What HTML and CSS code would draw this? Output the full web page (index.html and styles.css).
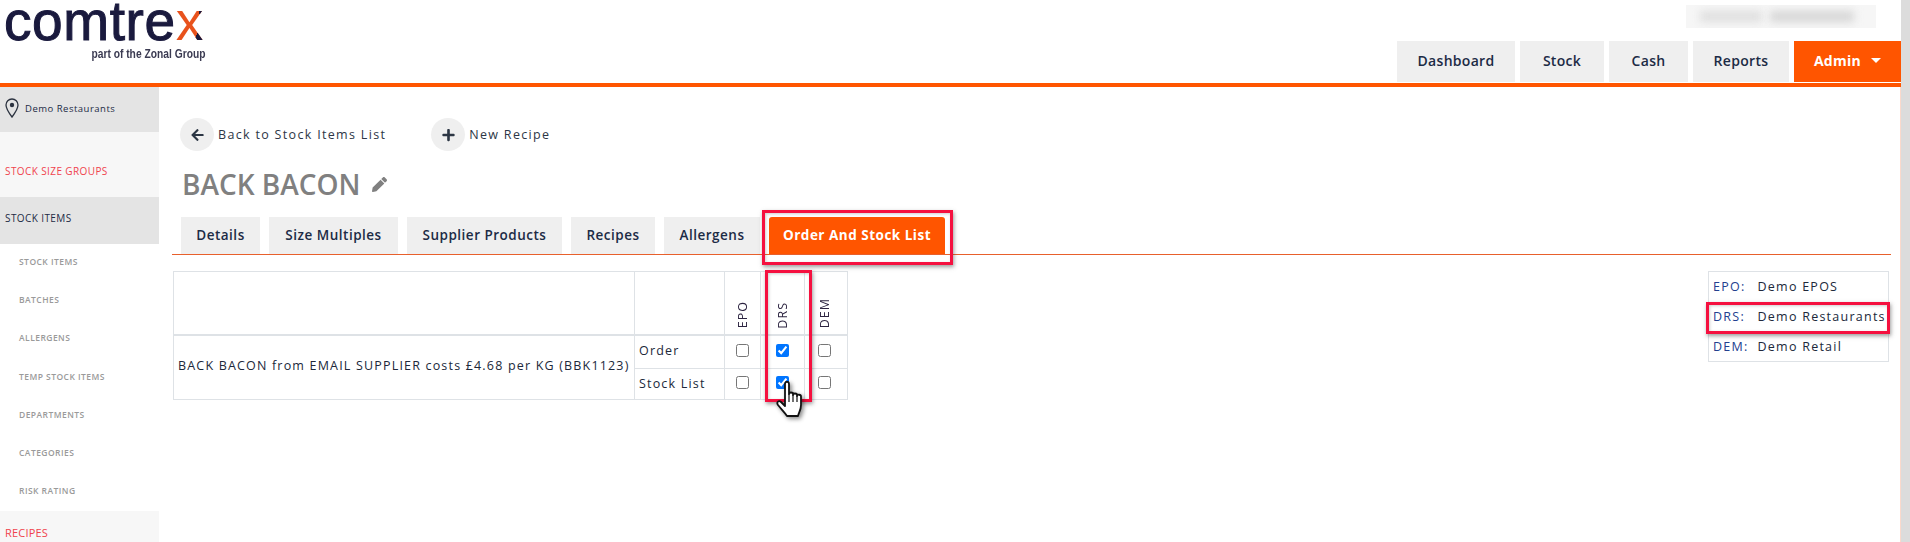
FILE: index.html
```html
<!DOCTYPE html>
<html lang="en">
<head>
<meta charset="utf-8">
<title>Back Bacon</title>
<link rel="stylesheet" href="styles.css">
</head>
<body>
<div class="page">
  <header class="header">
    <div class="logo">
      <div class="logo-word">comtre<span class="logo-x">x</span></div>
      <div class="logo-sub">part of the Zonal Group</div>
    </div>
    <div class="header-right">
      <div class="user-blur"><span class="blur-a"></span><span class="blur-b"></span></div>
      <nav class="topnav">
        <a class="topnav-item nav-dashboard">Dashboard</a>
        <a class="topnav-item nav-stock">Stock</a>
        <a class="topnav-item nav-cash">Cash</a>
        <a class="topnav-item nav-reports">Reports</a>
        <a class="topnav-item nav-admin">Admin<span class="caret"></span></a>
      </nav>
    </div>
  </header>
  <div class="body-row">
    <aside class="sidebar">
      <div class="site">
        <svg class="pin" viewBox="0 0 14 20"><path d="M7 1C3.600 1 1 3.600 1 7c0 4 6 12 6 12s6-8 6-12c0-3.400-2.600-6-6-6z" fill="none" stroke="#2c3340" stroke-width="1.300"/><circle cx="7" cy="7" r="2.200" fill="#2c3340"/></svg>
        <span>Demo Restaurants</span>
      </div>
      <div class="group group-first">STOCK SIZE GROUPS</div>
      <div class="group-open">STOCK ITEMS</div>
      <ul class="sublist">
        <li>STOCK ITEMS</li>
        <li>BATCHES</li>
        <li>ALLERGENS</li>
        <li>TEMP STOCK ITEMS</li>
        <li>DEPARTMENTS</li>
        <li>CATEGORIES</li>
        <li>RISK RATING</li>
      </ul>
      <div class="group group-last">RECIPES</div>
    </aside>
    <main class="main">
      <div class="actions">
        <a class="action action-back">
          <span class="action-icon"><svg class="icon-arrow" viewBox="0 0 448 512"><path d="M257.500 445.100l-22.200 22.200c-9.400 9.400-24.600 9.400-33.900 0L7 273c-9.400-9.400-9.400-24.600 0-33.900L201.400 44.700c9.400-9.400 24.600-9.400 33.900 0l22.200 22.200c9.500 9.500 9.300 25-.4 34.300L136.600 216H424c13.300 0 24 10.700 24 24v32c0 13.300-10.700 24-24 24H136.600l120.500 114.800c9.800 9.300 10 24.800.4 34.300z"/></svg></span>
          <span>Back to Stock Items List</span>
        </a>
        <a class="action">
          <span class="action-icon"><svg class="icon-plus" viewBox="0 0 448 512"><path d="M416 208H272V64c0-17.670-14.330-32-32-32h-32c-17.670 0-32 14.330-32 32v144H32c-17.670 0-32 14.330-32 32v32c0 17.670 14.330 32 32 32h144v144c0 17.670 14.330 32 32 32h32c17.670 0 32-14.330 32-32V304h144c17.670 0 32-14.330 32-32v-32c0-17.670-14.330-32-32-32z"/></svg></span>
          <span>New Recipe</span>
        </a>
      </div>
      <div class="title-row">
        <h1 class="title">BACK BACON</h1>
        <svg class="icon-pencil" viewBox="0 0 512 512"><path d="M497.900 142.100l-46.100 46.100c-4.700 4.700-12.300 4.700-17 0l-111-111c-4.700-4.700-4.700-12.300 0-17l46.100-46.100c18.700-18.700 49.100-18.700 67.900 0l60.100 60.100c18.800 18.700 18.800 49.100 0 67.900zM284.200 99.800L21.600 362.400.4 483.900c-2.900 16.400 11.400 30.600 27.800 27.800l121.500-21.300 262.600-262.600c4.700-4.700 4.700-12.300 0-17l-111-111c-4.800-4.700-12.400-4.700-17.100 0z"/></svg>
      </div>
      <div class="tabs">
        <a class="tab tab-details">Details</a>
        <a class="tab tab-size">Size Multiples</a>
        <a class="tab tab-supplier">Supplier Products</a>
        <a class="tab tab-recipes">Recipes</a>
        <a class="tab tab-allergens">Allergens</a>
        <a class="tab tab-active">Order And Stock List</a>
      </div>
      <div class="panels">
        <table class="grid">
          <colgroup>
            <col class="col-name"><col class="col-type"><col class="col-epo"><col class="col-drs"><col class="col-dem">
          </colgroup>
          <thead>
            <tr class="row-head">
              <th></th><th></th>
              <th><span class="vert">EPO</span></th>
              <th><span class="vert">DRS</span></th>
              <th class="cell-dem"><span class="vert">DEM</span></th>
            </tr>
          </thead>
          <tbody>
            <tr class="row-order">
              <td class="cell-name" rowspan="2">BACK BACON from EMAIL SUPPLIER costs £4.68 per KG (BBK1123)</td>
              <td class="cell-type">Order</td>
              <td class="check"><input type="checkbox"></td>
              <td class="check"><input type="checkbox" checked></td>
              <td class="check cell-dem"><input type="checkbox"></td>
            </tr>
            <tr class="row-stock">
              <td class="cell-type">Stock List</td>
              <td class="check"><input type="checkbox"></td>
              <td class="check"><input type="checkbox" checked></td>
              <td class="check cell-dem"><input type="checkbox"></td>
            </tr>
          </tbody>
        </table>
        <table class="legend">
          <tr><td class="code">EPO:</td><td>Demo EPOS</td></tr>
          <tr><td class="code">DRS:</td><td>Demo Restaurants</td></tr>
          <tr><td class="code">DEM:</td><td>Demo Retail</td></tr>
        </table>
      </div>
    </main>
  </div>
</div>
<div class="strip"></div>

<div class="mark mark-tab"></div>
<div class="mark mark-col"></div>
<div class="mark mark-legend"></div>
<svg class="hand" viewBox="0 0 30 38">
  <path d="M10 3c0-3 4-3 4 0v10c0-2 4-2 4 0v1c0-2 4-2 4 0v1c0-2 4-1.500 4 .5V24c0 5-2 7-3 11H12c-2-3-5-6-9-11-2-3 1-5 3-3l4 4z" fill="#fff" stroke="#111" stroke-width="1.800" stroke-linejoin="round"/>
  <path d="M14 13v8M18 14v7M22 15v6" fill="none" stroke="#111" stroke-width="1.200"/>
</svg>
</body>
</html>
```
FILE: styles.css
```css
* { box-sizing: border-box; }
html, body { margin: 0; height: 542px; overflow: hidden; }
body {
  display: flex;
  background: #fff;
  font-family: "Open Sans", "Noto Sans", sans-serif;
  color: #20283a;
}
a { color: inherit; text-decoration: none; }
.page { width: 1901px; height: 542px; overflow: hidden; }
.strip { width: 9px; height: 542px; background: #dcdcdc; }

/* header */
.header {
  height: 87px;
  display: flex;
  justify-content: space-between;
  border-bottom: 4px solid #ff5500;
}
.logo { padding-left: 4px; width: 210px; }
.logo-word {
  font-family: "Liberation Sans", Arial, sans-serif;
  font-size: 55px;
  line-height: 42px;
  height: 47px;
  letter-spacing: .6px;
  color: #1a1a3e;
  -webkit-text-stroke: 1px #1a1a3e;
}
.logo-x {
  color: transparent;
  -webkit-text-stroke: 0;
  background:
    linear-gradient(to bottom left, #1a1a3e 27%, transparent 27%),
    linear-gradient(to top left, #1a1a3e 27%, transparent 27%),
    #e8521c;
  -webkit-background-clip: text;
  background-clip: text;
}
.logo-sub {
  font-family: "Liberation Sans", Arial, sans-serif;
  font-weight: 700;
  font-size: 13.500px;
  line-height: 14px;
  color: #3b3b52;
  white-space: nowrap;
  text-align: right;
  padding-right: 6px;
  transform: scaleX(.76);
  transform-origin: right center;
}
.header-right {
  width: 505px;
  display: flex;
  flex-direction: column;
  align-items: flex-end;
}
.user-blur {
  width: 190px;
  height: 23px;
  margin: 5px 25px 13px 0;
  background: #f6f6f6;
  overflow: hidden;
  display: flex;
  gap: 8px;
  padding: 6px 0 0 14px;
}
.blur-a, .blur-b { display: block; height: 11px; background: #dfdfdf; filter: blur(4px); }
.blur-a { width: 62px; }
.blur-b { width: 84px; background: #d6d6d6; }
.topnav { display: flex; gap: 5px; height: 41px; }
.topnav-item {
  display: flex;
  align-items: center;
  justify-content: center;
  padding-bottom: 2px;
  background: #efefef;
  font-size: 14px;
  font-weight: 600;
  letter-spacing: .3px;
  color: #1c2b45;
}
.nav-dashboard { width: 118px; }
.nav-stock { width: 84px; }
.nav-cash { width: 79px; }
.nav-reports { width: 96px; }
.nav-admin { width: 107px; background: #ff5500; color: #fff; font-weight: 700; }
.caret {
  margin-left: 10px;
  border-top: 5px solid #fff;
  border-left: 5px solid transparent;
  border-right: 5px solid transparent;
}

/* layout */
.body-row { display: flex; height: 455px; border-right: 1px solid #fbd9cc; }

/* sidebar */
.sidebar { width: 159px; flex: none; font-size: 10px; letter-spacing: .4px; }
.site {
  height: 45px;
  background: #e4e4e4;
  display: flex;
  align-items: center;
  gap: 6px;
  padding: 0 0 3px 5px;
  font-size: 9.500px;
  letter-spacing: .5px;
  color: #1c2b45;
}
.pin { width: 14px; height: 20px; }
.group { background: #f7f7f7; color: #f0434d; padding-left: 5px; }
.group-first { height: 65px; padding-top: 32px; line-height: 14px; }
.group-open {
  height: 47px;
  background: #e4e4e4;
  color: #1c2b45;
  padding: 14px 0 0 5px;
  line-height: 14px;
}
.sublist { list-style: none; margin: 0; padding: 0; height: 267px; padding-top: 3px; }
.sublist li {
  height: 38.200px;
  line-height: 30px;
  padding-left: 19px;
  font-size: 8.500px;
  font-weight: 600;
  letter-spacing: .45px;
  color: #9a9a9a;
}
.group-last { height: 31px; padding-top: 14px; font-size: 11px; line-height: 16px; letter-spacing: .2px; }

/* main */
.main { flex: 1; padding: 31px 9px 0 13px; min-width: 0; }
.actions { display: flex; padding-left: 8px; gap: 44px; height: 33px; font-size: 12.500px; letter-spacing: 1.320px; color: #2d3646; }
.action { display: flex; align-items: center; gap: 4px; }
.action-back { margin-right: 1px; }
.action-icon {
  width: 34px;
  height: 33px;
  border-radius: 50%;
  background: #efefef;
  display: flex;
  align-items: center;
  justify-content: center;
}
.icon-arrow, .icon-plus { width: 13px; height: 14px; fill: #2c3644; }
.title-row { display: flex; align-items: center; height: 42px; margin-top: 12px; padding-left: 10px; gap: 11px; }
.title { margin: 0; font-size: 28px; font-weight: 600; color: #808080; letter-spacing: 0; line-height: 42px; }
.icon-pencil { width: 15px; height: 15px; fill: #808080; }
.tabs {
  display: flex;
  height: 38px;
  margin-top: 12px;
  padding-left: 9px;
  border-bottom: 1px solid #e8602c;
}
.tab {
  height: 37px;
  display: flex;
  align-items: center;
  justify-content: center;
  padding-bottom: 2px;
  background: #efefef;
  font-size: 13.500px;
  font-weight: 600;
  letter-spacing: .5px;
  color: #1c2b45;
}
.tab-details { width: 79px; margin-right: 9px; }
.tab-size { width: 129px; margin-right: 9px; }
.tab-supplier { width: 155px; margin-right: 9px; }
.tab-recipes { width: 84px; margin-right: 9px; }
.tab-allergens { width: 96px; margin-right: 9px; }
.tab-active { width: 176px; background: #ff5500; color: #fff; font-weight: 700; border-radius: 3px 3px 0 0; }

/* tables */
.panels { display: flex; justify-content: space-between; align-items: flex-start; margin-top: 16px; padding: 0 2px 0 1px; }
.grid { border-collapse: collapse; table-layout: fixed; width: 674px; font-size: 12.500px; letter-spacing: 1.180px; color: #20283a; }
.grid th, .grid td { border: 1px solid #dee2e6; padding: 0; font-weight: 400; }
.col-name { width: 461px; }
.col-type { width: 90px; }
.col-epo { width: 36px; }
.col-drs { width: 44px; }
.col-dem { width: 43px; }
.row-head { height: 63px; }
.row-head th { border-bottom-width: 2px; vertical-align: bottom; padding-bottom: 5px; }
.row-order { height: 34px; }
.row-stock { height: 31px; }
.grid .cell-name { padding: 0 0 4px 4px; }
.grid .cell-type { padding: 0 0 2px 4px; }
.grid td.check { padding: 0 0 2px; text-align: center; font-size: 0; line-height: 0; }
.row-stock td.check { padding-bottom: 3px; }
.grid .cell-dem { padding-right: 3px; }
.grid td.check.cell-dem { padding-right: 3px; }
.check input { margin: 0; display: inline-block; vertical-align: middle; }
.vert { writing-mode: vertical-rl; transform: rotate(180deg); display: block; width: fit-content; margin: 0 auto; font-size: 12.500px; letter-spacing: 1px; color: #2c2440; }
.legend { border-collapse: collapse; width: 181px; border: 1px solid #dee2e6; font-size: 12.500px; letter-spacing: 1.250px; color: #20283a; }
.legend td { height: 30px; padding: 0 0 0 4px; white-space: nowrap; }
.legend .code { width: 49px; color: #23408f; }
.legend td + td { padding-left: 0; }

/* annotation overlays */
.mark {
  position: absolute;
  border: 3px solid #f5103f;
  box-shadow: 1px 2px 4px rgba(60, 60, 60, .5), inset 1px 1px 3px rgba(60, 60, 60, .25);
}
.mark-tab { left: 762px; top: 210px; width: 191px; height: 55px; }
.mark-col { left: 765px; top: 270px; width: 47px; height: 132px; }
.mark-legend { left: 1706px; top: 302px; width: 184px; height: 32px; }
.hand { position: absolute; left: 775px; top: 381px; width: 30px; height: 38px; filter: drop-shadow(2px 2px 2px rgba(0,0,0,.45)); }
```
